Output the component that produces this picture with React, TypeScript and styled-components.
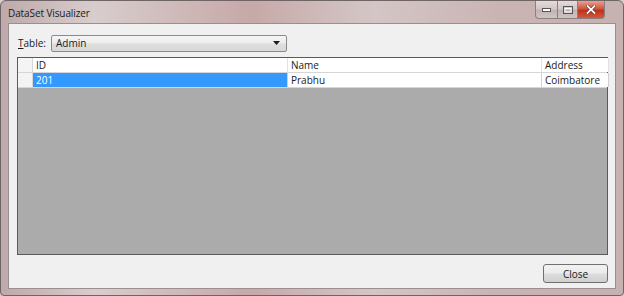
import styled, { createGlobalStyle } from "styled-components";

const GlobalStyle = createGlobalStyle`
  html, body {
    margin: 0;
    padding: 0;
    width: 624px;
    height: 296px;
    overflow: hidden;
    background: #d9cfcf;
  }
  * {
    box-sizing: border-box;
  }
`;

const Window = styled.div`
  width: 624px;
  height: 296px;
  display: flex;
  flex-direction: column;
  border: 1px solid #6f6466;
  border-radius: 6px 6px 4px 4px;
  background: linear-gradient(
    90deg,
    #bfa9aa 0%,
    #d8cdcd 15%,
    #c6a9a8 40%,
    #d4c6c6 60%,
    #c9b4b3 80%,
    #c7b2b2 100%
  );
  padding: 0 7px 6px 7px;
  font-family: "Open Sans", "Liberation Sans", sans-serif;
`;

const TitleBar = styled.div`
  height: 22px;
  display: flex;
  align-items: flex-start;
  justify-content: space-between;
`;

const Title = styled.div`
  font-size: 10px;
  color: #1a1a1a;
  padding-top: 5px;
  letter-spacing: -0.1px;
`;

const Caption = styled.div`
  display: flex;
  margin-right: 11px;
`;

const CaptionButton = styled.div<{ $kind: "min" | "max" | "close" }>`
  width: ${(p) => (p.$kind === "close" ? "27px" : p.$kind === "max" ? "20px" : "23px")};
  height: 18px;
  display: flex;
  align-items: center;
  justify-content: center;
  border: 1px solid #8d7f80;
  border-top: none;
  border-left-width: ${(p) => (p.$kind === "min" ? "1px" : "0")};
  border-radius: ${(p) =>
    p.$kind === "min" ? "0 0 0 4px" : p.$kind === "close" ? "0 0 4px 0" : "0"};
  background: ${(p) =>
    p.$kind === "close"
      ? "linear-gradient(180deg, #e8a290 0%, #d2563f 45%, #c0311b 55%, #d25a3c 100%)"
      : "linear-gradient(180deg, #e4dcdc 0%, #d3c8c8 45%, #c2b4b4 55%, #cfc3c3 100%)"};
`;

const Client = styled.div`
  flex: 1;
  background: #f0f0f0;
  border: 1px solid #9c8e90;
  display: flex;
  flex-direction: column;
  padding: 10px 7px 5px 8px;
`;

const TableRow = styled.div`
  display: flex;
  align-items: center;
  gap: 6px;
  height: 18px;
`;

const Label = styled.label`
  font-size: 10px;
  color: #1a1a1a;
  width: 27px;
  margin-left: 1px;
  u {
    text-decoration: underline;
  }
`;

const Combo = styled.div`
  width: 236px;
  height: 17px;
  border: 1px solid #8a8a8a;
  border-radius: 2px;
  background: linear-gradient(180deg, #f5f5f5 0%, #ececec 48%, #dedede 52%, #d8d8d8 100%);
  display: flex;
  align-items: center;
  justify-content: space-between;
  padding: 0 6px 0 4px;
  font-size: 10px;
  color: #1a1a1a;
`;

const Grid = styled.div`
  margin-top: 5px;
  height: 198px;
  border: 1px solid #5a5a5a;
  background: #ababab;
  display: flex;
  flex-direction: column;
`;

const GridRow = styled.div`
  display: grid;
  grid-template-columns: 15px 255px 254px 67px;
  height: 15px;
  background: #ffffff;
  border-bottom: 1px solid #d6d6d6;
`;

const Cell = styled.div<{ $selected?: boolean; $header?: boolean }>`
  font-size: 10px;
  line-height: 14px;
  padding-left: 3px;
  white-space: nowrap;
  overflow: hidden;
  color: ${(p) => (p.$selected ? "#ffffff" : "#1a1a1a")};
  background: ${(p) => (p.$selected ? "#3399ff" : "#ffffff")};
  border-right: 1px solid ${(p) => (p.$header ? "#e2e2e2" : "#d0d0d0")};
`;

const RowHead = styled.div`
  background: #f4f4f4;
  border-right: 1px solid #d6d6d6;
`;

const Footer = styled.div`
  flex: 1;
  display: flex;
  justify-content: flex-end;
  align-items: flex-end;
`;

const Button = styled.button`
  width: 65px;
  height: 19px;
  border: 1px solid #707070;
  border-radius: 3px;
  background: linear-gradient(180deg, #f2f2f2 0%, #ebebeb 48%, #dddddd 52%, #cfcfcf 100%);
  font-family: "Open Sans", "Liberation Sans", sans-serif;
  font-size: 10px;
  color: #1a1a1a;
  padding: 0;
`;

const Arrow = () => (
  <svg width="7" height="4" viewBox="0 0 7 4">
    <path d="M0 0 H7 L3.5 4 Z" fill="#1a1a1a" />
  </svg>
);

const App = () => {
  return (
    <>
      <GlobalStyle />
      <Window>
        <TitleBar>
          <Title>DataSet Visualizer</Title>
          <Caption>
            <CaptionButton $kind="min">
              <svg width="9" height="4" viewBox="0 0 9 4">
                <rect x="0.5" y="0.5" width="8" height="3" fill="#fff" stroke="#555" />
              </svg>
            </CaptionButton>
            <CaptionButton $kind="max">
              <svg width="10" height="8" viewBox="0 0 10 8">
                <rect x="0.5" y="0.5" width="9" height="7" fill="none" stroke="#555" />
                <rect x="2" y="2.5" width="6" height="3.5" fill="none" stroke="#fff" />
              </svg>
            </CaptionButton>
            <CaptionButton $kind="close">
              <svg width="10" height="9" viewBox="0 0 10 9">
                <path
                  d="M1.5 1 L8.5 8 M8.5 1 L1.5 8"
                  stroke="#5a1a10"
                  strokeWidth="3"
                  strokeLinecap="square"
                />
                <path
                  d="M1.5 1 L8.5 8 M8.5 1 L1.5 8"
                  stroke="#ffffff"
                  strokeWidth="1.8"
                  strokeLinecap="square"
                />
              </svg>
            </CaptionButton>
          </Caption>
        </TitleBar>
        <Client>
          <TableRow>
            <Label>
              <u>T</u>able:
            </Label>
            <Combo>
              <span>Admin</span>
              <Arrow />
            </Combo>
          </TableRow>
          <Grid>
            <GridRow>
              <RowHead />
              <Cell $header>ID</Cell>
              <Cell $header>Name</Cell>
              <Cell $header>Address</Cell>
            </GridRow>
            <GridRow>
              <RowHead />
              <Cell $selected>201</Cell>
              <Cell>Prabhu</Cell>
              <Cell>Coimbatore</Cell>
            </GridRow>
          </Grid>
          <Footer>
            <Button>Close</Button>
          </Footer>
        </Client>
      </Window>
    </>
  );
};

export default App;
